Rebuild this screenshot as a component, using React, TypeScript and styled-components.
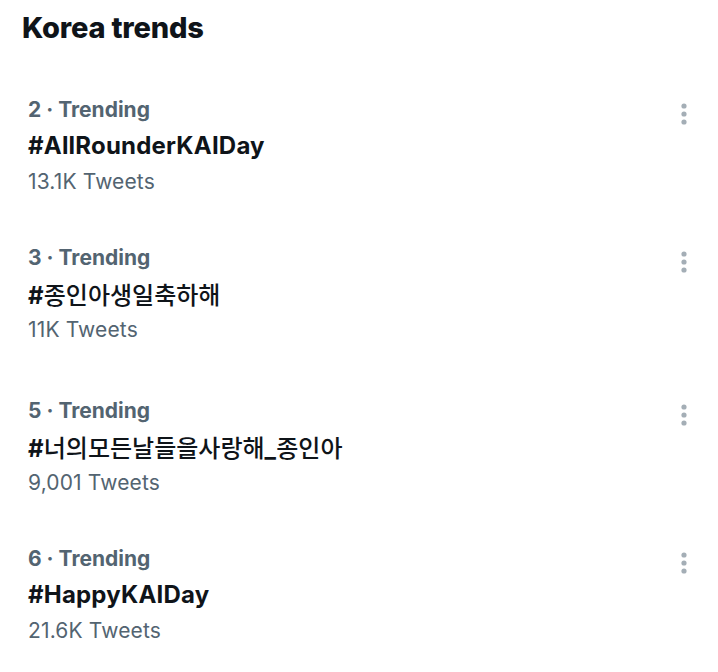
import React from 'react';
import styled, { createGlobalStyle } from 'styled-components';

const GlobalStyle = createGlobalStyle`
  html, body {
    margin: 0;
    padding: 0;
    background: #ffffff;
  }
  body {
    font-family: Inter, "Noto Sans CJK KR", sans-serif;
    color: #0f1419;
  }
`;

const Panel = styled.section`
  width: 718px;
  height: 672px;
  overflow: hidden;
  background: #ffffff;
`;

const Heading = styled.h2`
  margin: 0;
  padding-left: 22px;
  height: 56px;
  line-height: 56px;
  font-size: 29px;
  font-weight: 800;
  letter-spacing: -0.2px;
  color: #0f1419;
`;

const List = styled.div`
  display: flex;
  flex-direction: column;
  padding-top: 36px;
`;

const Item = styled.div<{ $gap: number }>`
  display: flex;
  align-items: flex-start;
  justify-content: space-between;
  padding: 0 22px 0 28px;
  margin-bottom: ${(p) => p.$gap}px;
`;

const Info = styled.div`
  display: flex;
  flex-direction: column;
`;

const Meta = styled.div`
  height: 36px;
  line-height: 36px;
  font-size: 21px;
  font-weight: 700;
  color: #536471;
`;

const Topic = styled.div`
  height: 36px;
  line-height: 36px;
  font-size: 24px;
  font-weight: 700;
  letter-spacing: 0.2px;
  color: #0f1419;
  white-space: nowrap;
`;

const Hangul = styled.span`
  font-family: "Noto Sans CJK KR", sans-serif;
  font-weight: 500;
  letter-spacing: 0;
`;

const Count = styled.div`
  height: 36px;
  line-height: 36px;
  font-size: 21px;
  font-weight: 400;
  letter-spacing: 0.15px;
  color: #536471;
`;

const MoreButton = styled.button`
  border: 0;
  background: transparent;
  padding: 0;
  margin-top: 8px;
  width: 24px;
  height: 28px;
  display: flex;
  align-items: center;
  justify-content: center;
  cursor: pointer;
`;

const DotsIcon = () => (
  <svg width="6" height="24" viewBox="0 0 6 24">
    <circle cx="3" cy="4" r="2.6" fill="#a4aeb6" />
    <circle cx="3" cy="12" r="2.6" fill="#a4aeb6" />
    <circle cx="3" cy="20" r="2.6" fill="#a4aeb6" />
  </svg>
);

// korean runs render lighter than the latin part of a hashtag
const renderTopic = (text: string) =>
  text.split(/([\u3131-\uD79D]+)/).map((part, i) =>
    /[\u3131-\uD79D]/.test(part) ? <Hangul key={i}>{part}</Hangul> : part
  );

const trends = [
  { rank: 2, topic: '#AllRounderKAIDay', count: '13.1K Tweets', gap: 40 },
  { rank: 3, topic: '#종인아생일축하해', count: '11K Tweets', gap: 45 },
  { rank: 5, topic: '#너의모든날들을사랑해_종인아', count: '9,001 Tweets', gap: 40 },
  { rank: 6, topic: '#HappyKAIDay', count: '21.6K Tweets', gap: 0 },
];

const App: React.FC = () => {
  return (
    <Panel>
      <GlobalStyle />
      <Heading>Korea trends</Heading>
      <List>
        {trends.map((t) => (
          <Item key={t.rank} $gap={t.gap}>
            <Info>
              <Meta>{t.rank} · Trending</Meta>
              <Topic>{renderTopic(t.topic)}</Topic>
              <Count>{t.count}</Count>
            </Info>
            <MoreButton aria-label="More">
              <DotsIcon />
            </MoreButton>
          </Item>
        ))}
      </List>
    </Panel>
  );
};

export default App;
